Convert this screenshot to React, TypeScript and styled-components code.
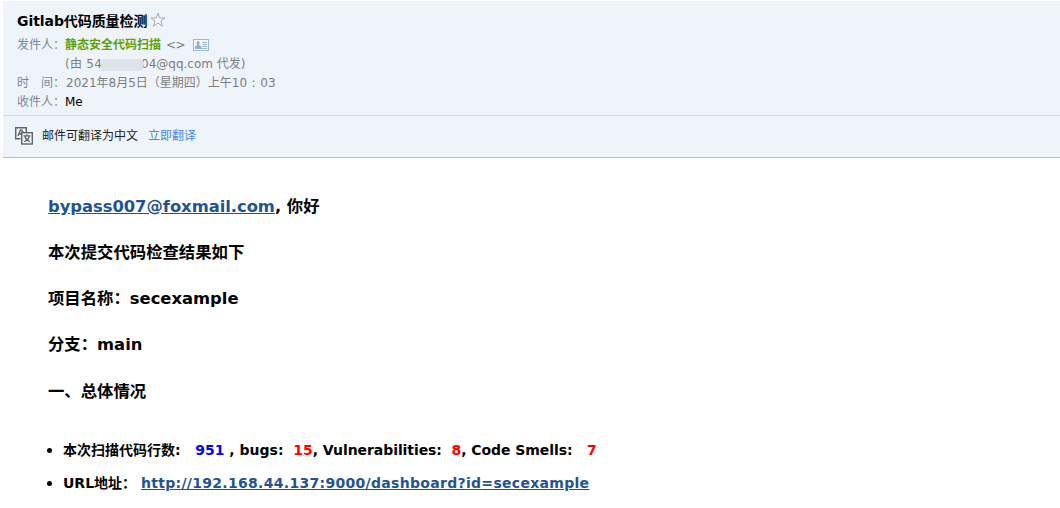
import React from "react";
import styled, { createGlobalStyle } from "styled-components";

const GlobalStyle = createGlobalStyle`
  * { box-sizing: border-box; }
  body {
    margin: 0;
    background: #fff;
    color: #000;
    overflow: hidden;
    font-family: "DejaVu Sans", "Noto Sans CJK SC", sans-serif;
  }
`;

const Page = styled.main`
  height: 508px;
  padding: 1px 0 0 3px;
`;

const MailHeader = styled.header`
  height: 115px;
  padding: 8px 14px 0;
  background: #eff4fb;
  border-bottom: 1px solid #d5dadf;
`;

const TitleRow = styled.div`
  display: flex;
  align-items: center;
  height: 25px;
  margin-bottom: 2px;
`;

const Title = styled.h1`
  margin: 0;
  font-size: 14px;
  line-height: 25px;
  letter-spacing: -0.07px;
  white-space: nowrap;
`;

const StarIcon = styled.svg`
  width: 16px;
  height: 16px;
  margin: -3px 0 0 2.5px;
`;

const MetaRow = styled.div`
  display: flex;
  align-items: center;
  height: 19px;
  font-size: 12px;
  line-height: 19px;
  color: #7d7d7d;
  white-space: pre;
`;

const MetaLabel = styled.span`
  width: 48px;
  flex: none;
  color: #798699;
`;

const Run = styled.span<{ $spacing?: number; $color?: string }>`
  letter-spacing: ${(p) => p.$spacing ?? 0}px;
  ${(p) => p.$color && `color: ${p.$color};`}
`;

const Indented = styled.div<{ $indent: number }>`
  display: flex;
  align-items: center;
  padding-left: ${(p) => p.$indent}px;
`;

const Sender = styled.span`
  color: #5fa207;
  font-weight: 700;
`;

const Angles = styled.span`
  margin-left: 5px;
  letter-spacing: -0.5px;
`;

const CardIcon = styled.svg`
  width: 16px;
  height: 12px;
  margin: -1px 0 0 8px;
`;

const Redaction = styled.span`
  width: 42px;
  height: 12px;
  margin: 0 -2px 0 -1px;
  border-radius: 3px;
  background: #dde3e8;
  z-index: 1;
`;

const TranslateBar = styled.section`
  display: flex;
  align-items: center;
  height: 42px;
  padding: 0 12px 2px;
  background: #eff4fb;
  border-bottom: 1px solid #a9c0d5;
  font-size: 12px;
  line-height: 20px;
  color: #222;
`;

const TranslateIcon = styled.svg`
  width: 18px;
  height: 18px;
  margin: 1px 9px 0 0;
`;

const TranslateLink = styled.a`
  margin-left: 10px;
  color: #3f8be5;
`;

const Message = styled.article`
  padding: 26px 0 0 45px;
`;

const Heading = styled.h3`
  height: 46.14px;
  margin: 0;
  font-size: 16.38px;
  line-height: 46px;
  white-space: pre;
`;

const Link = styled.a<{ $spacing?: number }>`
  color: #1e5494;
  text-decoration: underline;
  letter-spacing: ${(p) => p.$spacing ?? 0}px;
`;

const Results = styled.ul`
  margin: 19.6px 0 0;
  padding: 0 0 0 15px;
  list-style: none;
  font-size: 14px;
  font-weight: 700;
`;

const ResultItem = styled.li`
  display: flex;
  align-items: center;
  height: 33px;
  margin-left: -16px;
  line-height: 33px;
  white-space: pre;
  &::before {
    content: "";
    width: 5px;
    height: 5px;
    margin: 0 11px 0 0;
    border-radius: 50%;
    background: #000;
  }
`;

export default function App() {
  return (
    <Page>
      <GlobalStyle />
      <MailHeader>
        <TitleRow>
          <Title>Gitlab代码质量检测</Title>
          <StarIcon viewBox="0 0 16 16" fill="#f8fafc" stroke="#a4a8ac">
            <path d="M8 1.2 9.8 6H15l-4.1 3.1 1.6 5.1L8 11.1l-4.5 3.1 1.6-5.1L1 6h5.2z" />
          </StarIcon>
        </TitleRow>
        <MetaRow>
          <MetaLabel>发件人：</MetaLabel>
          <Sender>静态安全代码扫描</Sender>
          <Angles>&lt;&gt;</Angles>
          <CardIcon viewBox="0 0 16 12" fill="none" stroke="#9bb9d3">
            <rect x="0.5" y="0.5" width="15" height="11" fill="#f5f9fd" />
            <path d="M9 3.5h5M10 5.5h4M9 7.5h5M2 9.5h12" />
            <path d="M5 2a2 2 0 0 1 1.3 3.3v1l2 1.2V10H2V7.5l2-1.2v-1A2 2 0 0 1 5 2z" fill="#8fb0cd" stroke="none" />
          </CardIcon>
        </MetaRow>
        <MetaRow>
          <MetaLabel />
          <Indented $indent={0}>
            <Run $spacing={0.25}>(由 54</Run>
            <Redaction />
            <Run>04@qq.com 代发)</Run>
          </Indented>
        </MetaRow>
        <MetaRow>
          <MetaLabel>时　间：</MetaLabel>
          <Indented $indent={1}>
            <Run>2021年8月5日（星期四）上午10</Run>
            <Run $spacing={0.5}> : </Run>
            <Run>03</Run>
          </Indented>
        </MetaRow>
        <MetaRow>
          <MetaLabel>收件人：</MetaLabel>
          <Run $color="#000">Me</Run>
        </MetaRow>
      </MailHeader>
      <TranslateBar>
        <TranslateIcon viewBox="0 0 18 18" fill="none" stroke="#606468">
          <path d="M5.5 11.7H.7v-11h10.6V5" strokeWidth="1.5" />
          <path d="M3 9 5.5 3h1L8.5 6M4 7h3" strokeWidth="1.4" />
          <rect x="6.7" y="5.7" width="10.6" height="11.3" fill="#f2f5f9" strokeWidth="1.4" />
          <path d="M8.5 8.8h7M12 7.3v1.5M9.8 9.5c.8 2.5 2.5 4 5 5.2M14.3 9.5c-.8 2.5-2.5 4-5 5.2" strokeWidth="1.2" />
        </TranslateIcon>
        邮件可翻译为中文
        <TranslateLink>立即翻译</TranslateLink>
      </TranslateBar>
      <Message>
        <Heading>
          <Link $spacing={-0.03}>bypass007@foxmail.com</Link>, 你好
        </Heading>
        <Heading>本次提交代码检查结果如下</Heading>
        <Heading>项目名称：secexample</Heading>
        <Heading>分支：main</Heading>
        <Heading>一、总体情况</Heading>
        <Results>
          <ResultItem>
            <Run>本次扫描代码行数:   </Run>
            <Run $color="#00f">951</Run>
            <Run> , bugs:  </Run>
            <Run $color="#f00">15</Run>
            <Run $spacing={-0.07}>, Vulnerabilities:  </Run>
            <Run $color="#f00">8</Run>
            <Run $spacing={-0.07}>, Code Smells:   </Run>
            <Run $color="#f00">7</Run>
          </ResultItem>
          <ResultItem>
            <Run>URL地址： </Run>
            <Link $spacing={0.3}>http://192.168.44.137:9000/dashboard?id=secexample</Link>
          </ResultItem>
        </Results>
      </Message>
    </Page>
  );
}
